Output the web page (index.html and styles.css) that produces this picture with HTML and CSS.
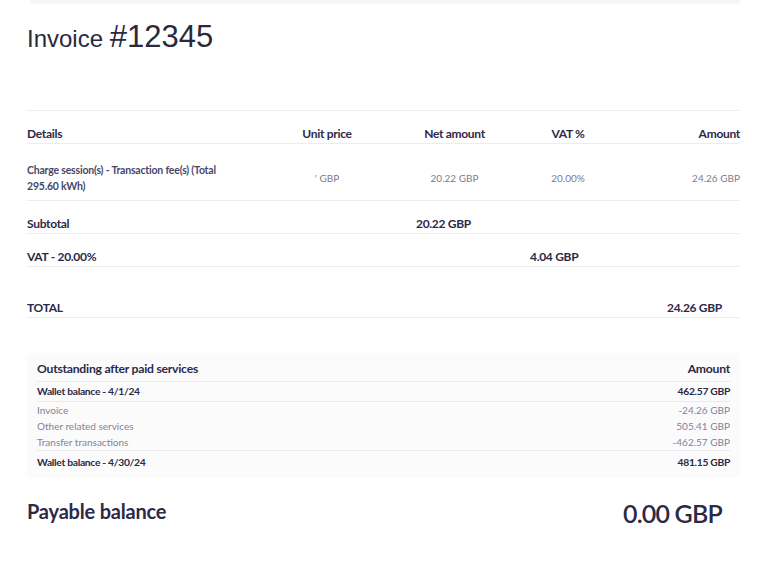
FILE: index.html
```html
<!DOCTYPE html>
<html lang="en">
<head>
<meta charset="utf-8">
<title>Invoice #12345</title>
<link rel="stylesheet" href="styles.css">
</head>
<body>
<div class="page">
  <div class="top-strip"></div>
  <h1 class="title"><span class="title-word">Invoice </span><span class="title-num">#12345</span></h1>

  <div class="lines">
    <div class="row head">
      <div class="c-details">Details</div>
      <div class="c-mid">Unit price</div>
      <div class="c-mid">Net amount</div>
      <div class="c-mid">VAT %</div>
      <div class="c-right">Amount</div>
    </div>
    <div class="row item">
      <div class="c-details item-name">Charge session(s) - Transaction fee(s) (Total 295.60 kWh)</div>
      <div class="c-mid item-val">' GBP</div>
      <div class="c-mid item-val">20.22 GBP</div>
      <div class="c-mid item-val">20.00%</div>
      <div class="c-right item-val">24.26 GBP</div>
    </div>
    <div class="sum subtotal">
      <div>Subtotal</div>
      <div>20.22 GBP</div>
    </div>
    <div class="sum vat">
      <div>VAT - 20.00%</div>
      <div>4.04 GBP</div>
    </div>
    <div class="sum total">
      <div>TOTAL</div>
      <div class="total-val">24.26 GBP</div>
    </div>
  </div>

  <div class="wallet">
    <div class="w-row w-head">
      <div>Outstanding after paid services</div>
      <div>Amount</div>
    </div>
    <div class="w-row w-bold">
      <div>Wallet balance - 4/1/24</div>
      <div>462.57 GBP</div>
    </div>
    <div class="w-group">
      <div class="w-row w-light"><div>Invoice</div><div>-24.26 GBP</div></div>
      <div class="w-row w-light"><div>Other related services</div><div>505.41 GBP</div></div>
      <div class="w-row w-light"><div>Transfer transactions</div><div>-462.57 GBP</div></div>
    </div>
    <div class="w-row w-bold w-last">
      <div>Wallet balance - 4/30/24</div>
      <div>481.15 GBP</div>
    </div>
  </div>

  <div class="payable">
    <div class="payable-label">Payable balance</div>
    <div class="payable-val">0.00 GBP</div>
  </div>
</div>
</body>
</html>
```

FILE: styles.css
```css
html, body {
  margin: 0;
  padding: 0;
  background: #ffffff;
}

body {
  font-family: Lato, "Open Sans", "DejaVu Sans", sans-serif;
  color: #2b2a48;
}

.page {
  padding: 0 33px 0 27px;
}

.top-strip {
  height: 4px;
  margin: 0 0 0 3px;
  background: #f6f6f8;
  border-radius: 0 0 3px 3px;
}

.title {
  margin: 13px 0 0;
  height: 38px;
  line-height: 38px;
  font-weight: 400;
  font-family: "Liberation Sans", Arial, sans-serif;
  color: #2a2a3c;
}

.title-word {
  font-size: 24px;
}

.title-num {
  font-size: 31px;
}

.lines {
  margin-top: 55px;
  border-top: 1px solid #ececef;
}

.row {
  display: grid;
  grid-template-columns: 250px 100px 155px 72px 1fr;
  align-items: center;
  border-bottom: 1px solid #ececef;
}

.c-mid {
  text-align: center;
}

.c-right {
  text-align: right;
}

.head {
  padding: 15px 0 2px;
  font-size: 12px;
  line-height: 15px;
  font-weight: 700;
  letter-spacing: -0.3px;
}

.item {
  padding: 18px 0 6px;
}

.item-name {
  font-size: 10.5px;
  line-height: 16px;
  font-weight: 700;
  color: #48486a;
  padding-right: 40px;
  letter-spacing: -0.2px;
}

.item-val {
  font-size: 10px;
  line-height: 16px;
  color: #7c7c8c;
}

.sum {
  display: grid;
  border-bottom: 1px solid #ececef;
  font-size: 12px;
  line-height: 15px;
  font-weight: 700;
  letter-spacing: -0.3px;
}

.subtotal {
  grid-template-columns: 389px 1fr;
  padding: 15px 0 2px;
}

.vat {
  grid-template-columns: 503px 1fr;
  padding: 15px 0 2px;
}

.total {
  grid-template-columns: 1fr auto;
  padding: 33px 0 2px;
}

.total-val {
  padding-right: 18px;
}

.wallet {
  margin-top: 35px;
  padding: 8px 10px 9px;
  background: #fbfbfc;
  border-radius: 4px;
}

.w-row {
  display: flex;
  justify-content: space-between;
}

.w-head {
  font-size: 12.2px;
  line-height: 16px;
  font-weight: 700;
  letter-spacing: -0.25px;
  padding-bottom: 4px;
  border-bottom: 1px solid #ebebee;
}

.w-bold {
  font-size: 10.3px;
  line-height: 14px;
  font-weight: 700;
  letter-spacing: -0.3px;
  padding: 2px 0 3px;
  border-bottom: 1px solid #ebebee;
}

.w-group {
  border-bottom: 1px solid #ebebee;
}

.w-light {
  font-size: 10px;
  line-height: 16px;
  color: #82829a;
}

.w-last {
  border-bottom: 0;
  padding: 4px 0 0;
}

.payable {
  display: flex;
  justify-content: space-between;
  align-items: center;
  margin-top: 15px;
  padding-right: 18px;
  line-height: 32px;
}

.payable-label {
  font-size: 20px;
  font-weight: 700;
  letter-spacing: -0.2px;
}

.payable-val {
  font-size: 25px;
  font-weight: 600;
  margin-top: 4px;
  letter-spacing: -0.8px;
}
```
